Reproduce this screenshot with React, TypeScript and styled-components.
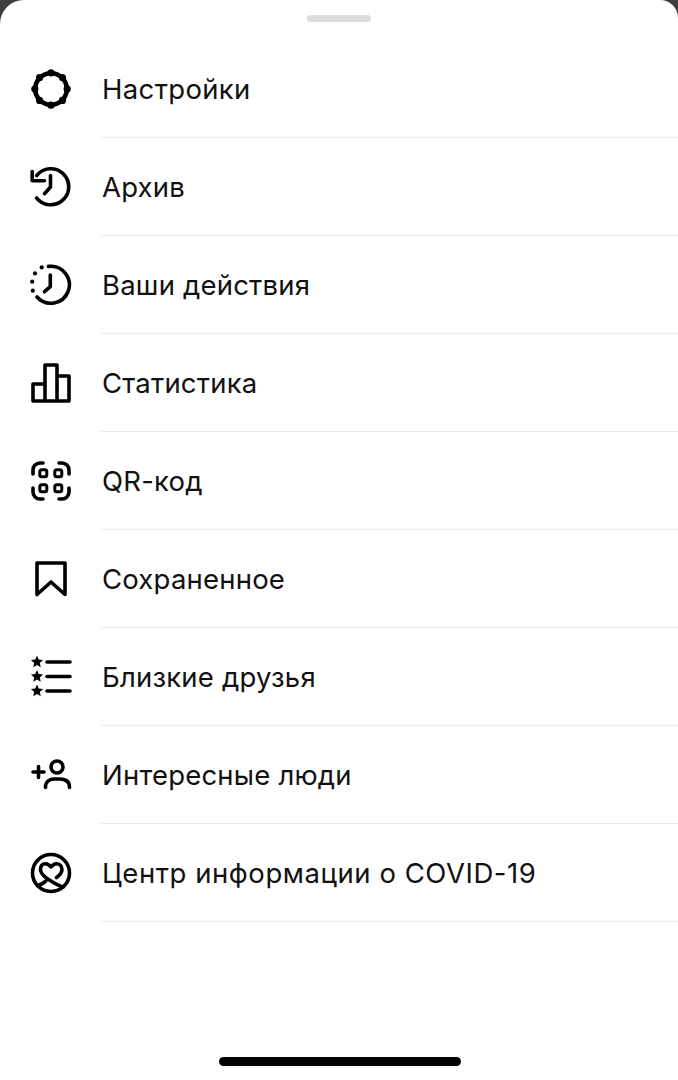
import React from 'react';
import styled, { createGlobalStyle } from 'styled-components';

const Global = createGlobalStyle`
  html, body { margin: 0; padding: 0; background: #3f3f3f; }
  body { width: 678px; height: 1080px; overflow: hidden; }
`;

const Sheet = styled.div`
  position: relative;
  width: 678px;
  height: 1080px;
  background: #fff;
  border-radius: 24px 18px 0 0;
  overflow: hidden;
  display: flex;
  flex-direction: column;
  font-family: Inter, "Liberation Sans", sans-serif;
  color: #111;
`;

const Handle = styled.div`
  width: 64px;
  height: 7px;
  margin: 15px auto 0;
  border-radius: 4px;
  background: #dcdcdc;
  flex: none;
`;

const List = styled.div`
  margin-top: 18px;
  display: flex;
  flex-direction: column;
`;

const Row = styled.div`
  height: 98px;
  display: flex;
  align-items: stretch;
`;

const IconSlot = styled.div`
  width: 101px;
  flex: none;
  display: flex;
  align-items: center;
  justify-content: center;
  box-sizing: border-box;
  svg { display: block; margin-left: 1px; }
`;

const Label = styled.div<{ $tracking: number }>`
  flex: 1;
  display: flex;
  align-items: center;
  padding-top: 1px;
  padding-left: 1px;
  box-sizing: border-box;
  border-bottom: 1.5px solid #ececec;
  font-size: 27.5px;
  letter-spacing: ${(p) => p.$tracking}px;
  white-space: nowrap;
`;

const HomeBar = styled.div`
  position: absolute;
  left: 219px;
  bottom: 14px;
  width: 242px;
  height: 9px;
  border-radius: 5px;
  background: #000;
`;

const Ico: React.FC<{ children: React.ReactNode }> = ({ children }) => (
  <svg width="42" height="42" viewBox="0 0 42 42" fill="none" stroke="#000" strokeWidth="3.6" strokeLinecap="round" strokeLinejoin="round">
    {children}
  </svg>
);

const bumps = [0, 45, 90, 135, 180, 225, 270, 315].map((a) => {
  const r = (a * Math.PI) / 180;
  return { x: 21 + 16.2 * Math.cos(r), y: 21 + 16.2 * Math.sin(r) };
});

const star = (cx: number, cy: number) => {
  const pts: string[] = [];
  for (let i = 0; i < 10; i++) {
    const rad = i % 2 === 0 ? 6.4 : 3;
    const a = -Math.PI / 2 + (i * Math.PI) / 5;
    pts.push(`${cx + rad * Math.cos(a)},${cy + rad * Math.sin(a)}`);
  }
  return pts.join(' ');
};

const items: { label: string; tracking?: number; icon: React.ReactNode }[] = [
  {
    label: 'Настройки',
    tracking: 0.35,
    icon: (
      <Ico>
        <circle cx="21" cy="21" r="15.8" strokeWidth="4.6" />
        {bumps.map((b, i) => <circle key={i} cx={b.x} cy={b.y} r="3.6" fill="#000" stroke="none" />)}
      </Ico>
    ),
  },
  {
    label: 'Архив',
    icon: (
      <Ico>
        <path d="M6.7 9.5 A18 18 0 1 1 6.7 32" />
        <path d="M2.2 5.5 V14.8 H14.5" />
        <path d="M20.5 9.5 V21 L14.5 27.7" />
      </Ico>
    ),
  },
  {
    label: 'Ваши действия',
    icon: (
      <Ico>
        <path d="M18.5 2.4 A18.5 18.5 0 1 1 7 33" />
        <path d="M20.3 11 V22.7 L14.5 27.7" />
        <circle cx="11.7" cy="3.4" r="2.1" fill="#000" stroke="none" />
        <circle cx="5" cy="9.4" r="2.1" fill="#000" stroke="none" />
        <circle cx="2.2" cy="17.7" r="2.1" fill="#000" stroke="none" />
        <circle cx="2.8" cy="26.7" r="2.1" fill="#000" stroke="none" />
      </Ico>
    ),
  },
  {
    label: 'Статистика',
    icon: (
      <Ico>
        <path d="M3 39 V22 H15 V39 Z M15 39 V3 H27 V39 Z M27 39 V14 H39 V39 Z" />
      </Ico>
    ),
  },
  {
    label: 'QR-код',
    icon: (
      <Ico>
        <path d="M3 14 V10 A7 7 0 0 1 10 3 H13 M29 3 H32 A7 7 0 0 1 39 10 V14 M39 28 V32 A7 7 0 0 1 32 39 H29 M13 39 H10 A7 7 0 0 1 3 32 V28" />
        <rect x="9.8" y="9.8" width="7" height="7" rx="2" strokeWidth="3" />
        <rect x="24.8" y="9.8" width="7" height="7" rx="2" strokeWidth="3" />
        <rect x="9.8" y="24.8" width="7" height="7" rx="2" strokeWidth="3" />
        <rect x="24.8" y="24.8" width="7" height="7" rx="2" strokeWidth="3" />
      </Ico>
    ),
  },
  {
    label: 'Сохраненное',
    icon: (
      <Ico>
        <path d="M7 5 H35 V36.5 L21 24 L7 36.5 Z" />
      </Ico>
    ),
  },
  {
    label: 'Близкие друзья',
    icon: (
      <Ico>
        <path d="M17 6 H40 M17 20.5 H40 M17 35 H40" />
        <polygon points={star(7, 6)} fill="#000" stroke="none" />
        <polygon points={star(7, 20.5)} fill="#000" stroke="none" />
        <polygon points={star(7, 35)} fill="#000" stroke="none" />
      </Ico>
    ),
  },
  {
    label: 'Интересные люди',
    icon: (
      <Ico>
        <circle cx="27" cy="13" r="6" />
        <path d="M15.5 33.5 C15.5 27 20 25 24 25 H30 C35 25 39.5 27 39.5 33.5" />
        <path d="M3 18 H14 M8.5 12.5 V23.5" />
      </Ico>
    ),
  },
  {
    label: 'Центр информации о COVID-19',
    tracking: 0.55,
    icon: (
      <Ico>
        <circle cx="21" cy="21" r="18.5" />
        <path d="M26.5 25.5 C30 23 32 20.5 32 17.5 C32 13.7 29.5 11.7 26.5 11.7 C24.3 11.7 22.5 13 21 15 C19.5 13 17.7 11.7 15.5 11.7 C12.5 11.7 10.5 13.7 10.5 17.5 C10.5 22 14.5 25 19 27.8 C24 31 28.5 34 33.5 35" />
        <path d="M7.5 33.5 C10.5 33 13 31.5 16 28.8" />
      </Ico>
    ),
  },
];

export default function App() {
  return (
    <>
      <Global />
      <Sheet>
        <Handle />
        <List>
          {items.map((it) => (
            <Row key={it.label}>
              <IconSlot>{it.icon}</IconSlot>
              <Label $tracking={it.tracking ?? 0.2}>{it.label}</Label>
            </Row>
          ))}
        </List>
        <HomeBar />
      </Sheet>
    </>
  );
}
